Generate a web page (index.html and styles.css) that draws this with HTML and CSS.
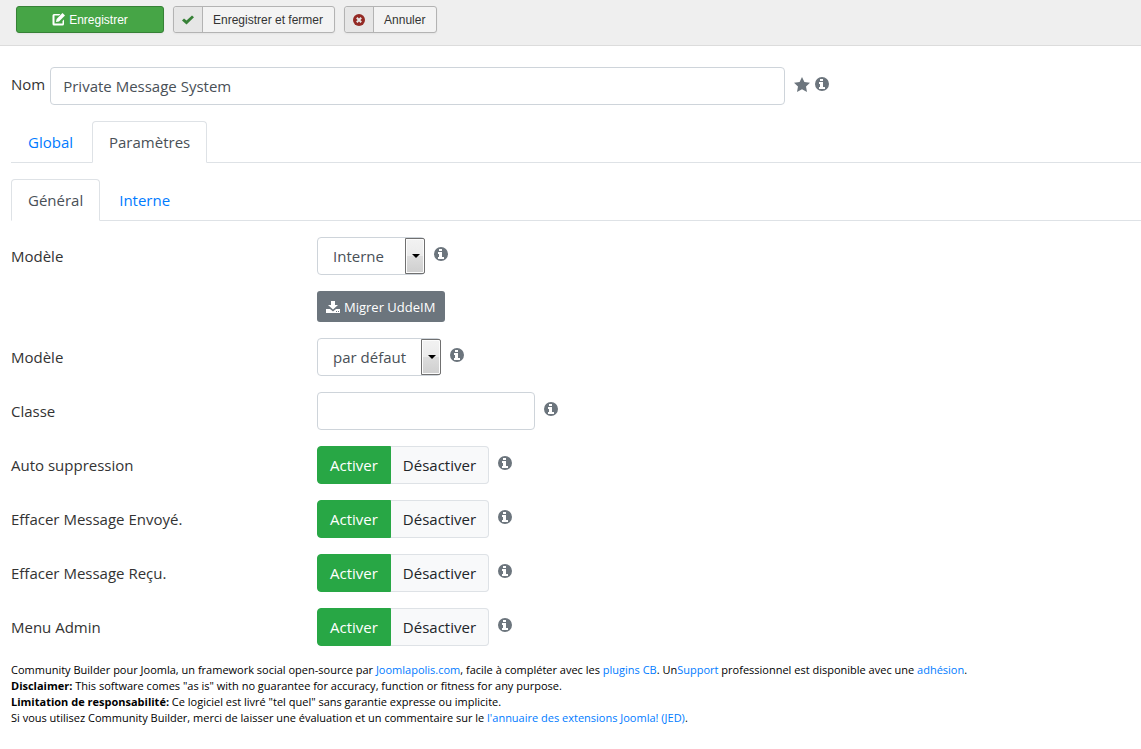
FILE: index.html
```html
<!DOCTYPE html>
<html lang="fr">
<head>
    <meta charset="UTF-8">
    <meta name="viewport" content="width=device-width, initial-scale=1.0">
    <title>Private Message System</title>
    <link rel="stylesheet" href="styles.css">
</head>
<body>
    <svg class="sprite" aria-hidden="true">
        <symbol id="info" viewBox="0 0 14 14">
            <path fill-rule="evenodd" d="M7 0a7 7 0 1 1 0 14A7 7 0 0 1 7 0zM5 2v2h3V2zM4 5v2h1v3H4v2h6v-2H8V5z"/>
        </symbol>
        <symbol id="star" viewBox="0 0 16 15">
            <path d="M8 0l2.400 5 5.600.700-4 3.800 1 5.500-5-2.700L3 15l1-5.500L0 5.700 5.600 5z"/>
        </symbol>
    </svg>

    <div class="toolbar">
        <button type="button" class="tool tool-save">
            <svg width="13" height="13" viewBox="0 0 13 13">
                <path fill-rule="evenodd" d="M2 1h6.500L7 2.500H2.500v8h8V8L12 6.500V11a1.500 1.500 0 0 1-1.500 1.500H2A1.500 1.500 0 0 1 .500 11V2.500A1.500 1.500 0 0 1 2 1z"/>
                <path d="M10.500 0L13 2.500 7 8.500l-3 .600.600-3z"/>
            </svg>
            Enregistrer
        </button>
        <button type="button" class="tool">
            <span class="tool-icon">
                <svg class="ok" width="14" height="12" viewBox="0 0 14 12">
                    <path d="M1 6.500L3 4.500l2.500 2L11 1.500l2 1.800L5.500 10.500z"/>
                </svg>
            </span>
            <span class="tool-text">Enregistrer et fermer</span>
        </button>
        <button type="button" class="tool">
            <span class="tool-icon">
                <svg width="12" height="12" viewBox="0 0 12 12">
                    <circle cx="6" cy="6" r="6" fill="#942a25"/>
                    <path d="M3.800 3.800l4.400 4.400M8.200 3.800l-4.400 4.400" stroke="#e6e6e6" stroke-width="2"/>
                </svg>
            </span>
            <span class="tool-text">Annuler</span>
        </button>
    </div>

    <main class="content">
        <div class="name-row">
            <label for="nom">Nom</label>
            <input type="text" id="nom" class="field field-name" value="Private Message System">
            <svg class="icon icon-star"><use href="#star"/></svg>
            <svg class="icon"><use href="#info"/></svg>
        </div>

        <nav class="tabs">
            <a href="#global">Global</a>
            <a href="#parametres" class="active">Paramètres</a>
        </nav>
        <nav class="tabs">
            <a href="#general" class="active">Général</a>
            <a href="#interne">Interne</a>
        </nav>

        <form>
            <div class="row">
                <label for="modele">Modèle</label>
                <span class="select">
                    <select id="modele" class="field">
                        <option>Interne</option>
                    </select>
                </span>
                <svg class="icon"><use href="#info"/></svg>
            </div>
            <div class="row row-button">
                <button type="button" class="migrate">
                    <svg width="14" height="12" viewBox="0 0 14 12">
                        <path d="M5 0h4v4h3L7 8.500 2 4h3z"/>
                        <path fill-rule="evenodd" d="M0 8h4l3 2.500L10 8h4v4H0zM10 10v1h1v-1zM12 10v1h1v-1z"/>
                    </svg>
                    Migrer UddeIM
                </button>
            </div>
            <div class="row">
                <label for="template">Modèle</label>
                <span class="select select-wide">
                    <select id="template" class="field">
                        <option>par défaut</option>
                    </select>
                </span>
                <svg class="icon"><use href="#info"/></svg>
            </div>
            <div class="row">
                <label for="classe">Classe</label>
                <input type="text" id="classe" class="field field-class">
                <svg class="icon"><use href="#info"/></svg>
            </div>
            <div class="row" role="radiogroup" aria-labelledby="l-auto">
                <span class="row-label" id="l-auto">Auto suppression</span>
                <span class="toggle">
                    <input type="radio" name="auto" id="auto1" checked>
                    <label for="auto1">Activer</label>
                    <input type="radio" name="auto" id="auto0">
                    <label for="auto0">Désactiver</label>
                </span>
                <svg class="icon"><use href="#info"/></svg>
            </div>
            <div class="row" role="radiogroup" aria-labelledby="l-envoye">
                <span class="row-label" id="l-envoye">Effacer Message Envoyé.</span>
                <span class="toggle">
                    <input type="radio" name="envoye" id="envoye1" checked>
                    <label for="envoye1">Activer</label>
                    <input type="radio" name="envoye" id="envoye0">
                    <label for="envoye0">Désactiver</label>
                </span>
                <svg class="icon"><use href="#info"/></svg>
            </div>
            <div class="row" role="radiogroup" aria-labelledby="l-recu">
                <span class="row-label" id="l-recu">Effacer Message Reçu.</span>
                <span class="toggle">
                    <input type="radio" name="recu" id="recu1" checked>
                    <label for="recu1">Activer</label>
                    <input type="radio" name="recu" id="recu0">
                    <label for="recu0">Désactiver</label>
                </span>
                <svg class="icon"><use href="#info"/></svg>
            </div>
            <div class="row" role="radiogroup" aria-labelledby="l-menu">
                <span class="row-label" id="l-menu">Menu Admin</span>
                <span class="toggle">
                    <input type="radio" name="menu" id="menu1" checked>
                    <label for="menu1">Activer</label>
                    <input type="radio" name="menu" id="menu0">
                    <label for="menu0">Désactiver</label>
                </span>
                <svg class="icon"><use href="#info"/></svg>
            </div>
        </form>

        <footer>
            <p>Community Builder pour Joomla, un framework social open-source par <a href="#joomlapolis">Joomlapolis.com</a>, facile à compléter avec les <a href="#plugins">plugins CB</a>. Un<a href="#support">Support</a> professionnel est disponible avec une <a href="#adhesion">adhésion</a>.</p>
            <p><strong>Disclaimer:</strong> This software comes "as is" with no guarantee for accuracy, function or fitness for any purpose.</p>
            <p><strong>Limitation de responsabilité:</strong> Ce logiciel est livré "tel quel" sans garantie expresse ou implicite.</p>
            <p>Si vous utilisez Community Builder, merci de laisser une évaluation et un commentaire sur le <a href="#jed">l'annuaire des extensions Joomla! (JED)</a>.</p>
        </footer>
    </main>
</body>
</html>
```
FILE: styles.css
```css
* {
    box-sizing: border-box;
}
body {
    margin: 0;
    background-color: #fff;
    color: #333;
    font-family: "Open Sans", "Noto Sans", sans-serif;
    font-size: 15px;
    line-height: 24px;
}
a {
    color: #007bff;
    text-decoration: none;
}
input, select, button {
    font: inherit;
}
.sprite {
    display: none;
}

/* toolbar */
.toolbar {
    display: flex;
    gap: 9px;
    padding: 6px 16px 12px;
    background-color: #efefef;
    border-bottom: 1px solid #dcdcdc;
}
.tool {
    display: flex;
    align-items: stretch;
    height: 27px;
    padding: 0;
    background-color: #f3f3f3;
    border: 1px solid #b3b3b3;
    border-radius: 3px;
    color: #333;
    font: 12px "Liberation Sans", Arial, sans-serif;
    box-shadow: 0 1px 2px rgba(0, 0, 0, .05);
}
.tool-save {
    align-items: center;
    justify-content: center;
    gap: 4px;
    width: 148px;
    background-color: #46a546;
    border-color: #368136;
    color: #fff;
}
.tool-save svg {
    fill: #fff;
}
.tool-icon {
    display: flex;
    align-items: center;
    justify-content: center;
    width: 29px;
    background-color: #e6e6e6;
    border-right: 1px solid #b3b3b3;
    border-radius: 3px 0 0 3px;
}
.tool-text {
    align-self: center;
    padding: 0 11px 0 10px;
}
.ok {
    fill: #378137;
}

/* form */
.content {
    padding: 21px 0 0 11px;
}
.name-row {
    display: flex;
    gap: 5px;
    margin-bottom: 16px;
}
.name-row label {
    padding-top: 5px;
}
.field {
    height: 38px;
    padding: 6px 12px;
    background-color: #fff;
    border: 1px solid #ced4da;
    border-radius: 4px;
    color: #495057;
}
.field-name {
    width: 65%;
}
.field-class {
    width: 218px;
}
.icon {
    flex: none;
    width: 14px;
    height: 14px;
    margin-top: 10px;
    fill: #6c757d;
}
.row .icon {
    margin-left: 9px;
}
.icon-star {
    width: 16px;
    height: 15px;
    margin-left: 4px;
}
.tabs {
    display: flex;
    gap: 2px;
    height: 42px;
    margin-bottom: 16px;
    border-bottom: 1px solid #dee2e6;
}
.tabs a {
    height: 42px;
    padding: 8px 16px;
    border: 1px solid transparent;
    border-radius: 4px 4px 0 0;
}
.tabs .active {
    background-color: #fff;
    border-color: #dee2e6 #dee2e6 #fff;
    color: #495057;
}
.row {
    display: flex;
    margin-bottom: 16px;
}
.row > label, .row-label {
    flex: none;
    width: 306px;
    padding-top: 7px;
}
.row-button {
    padding-left: 306px;
}
.select {
    position: relative;
    width: 108px;
}
.select-wide {
    width: 124px;
}
.select select {
    width: 100%;
    padding-left: 15px;
    appearance: none;
}
/* drop-down arrow, drawn over the right end of the select */
.select::before {
    content: "";
    position: absolute;
    top: 1px;
    right: 0;
    bottom: 1px;
    width: 18px;
    background: linear-gradient(#f2f2f2, #ebebeb 50%, #ddd 50%, #cfcfcf);
    border: 1px solid #707070;
    border-radius: 0 2px 2px 0;
    box-shadow: inset 0 0 0 1px #fcfcfc;
    pointer-events: none;
}
.select::after {
    content: "";
    position: absolute;
    top: 17px;
    right: 5px;
    border: 4px solid transparent;
    border-top-color: #000;
    border-bottom: 0;
    pointer-events: none;
}
.migrate {
    display: flex;
    align-items: center;
    gap: 4px;
    height: 31px;
    padding: 0 10px 0 9px;
    background-color: #6c757d;
    border: 0;
    border-radius: 3px;
    color: #fff;
    font-size: 13px;
}
.migrate svg {
    fill: #fff;
}
.toggle {
    display: flex;
}
.toggle input {
    position: absolute;
    opacity: 0;
}
.toggle label {
    height: 38px;
    padding: 6px 12px;
    background-color: #f8f9fa;
    border: 1px solid #dee2e6;
    border-radius: 0 4px 4px 0;
    color: #212529;
}
.toggle label:first-of-type {
    border-radius: 4px 0 0 4px;
}
.toggle input:checked + label {
    background-color: #28a745;
    border-color: #28a745;
    color: #fff;
}
/* the green half shares its edge with the next one */
.toggle input:checked + label + input + label {
    border-left: 0;
}

/* footer */
footer {
    color: #000;
    font-size: 11px;
    line-height: 16px;
}
footer p {
    margin: 0;
}
```
